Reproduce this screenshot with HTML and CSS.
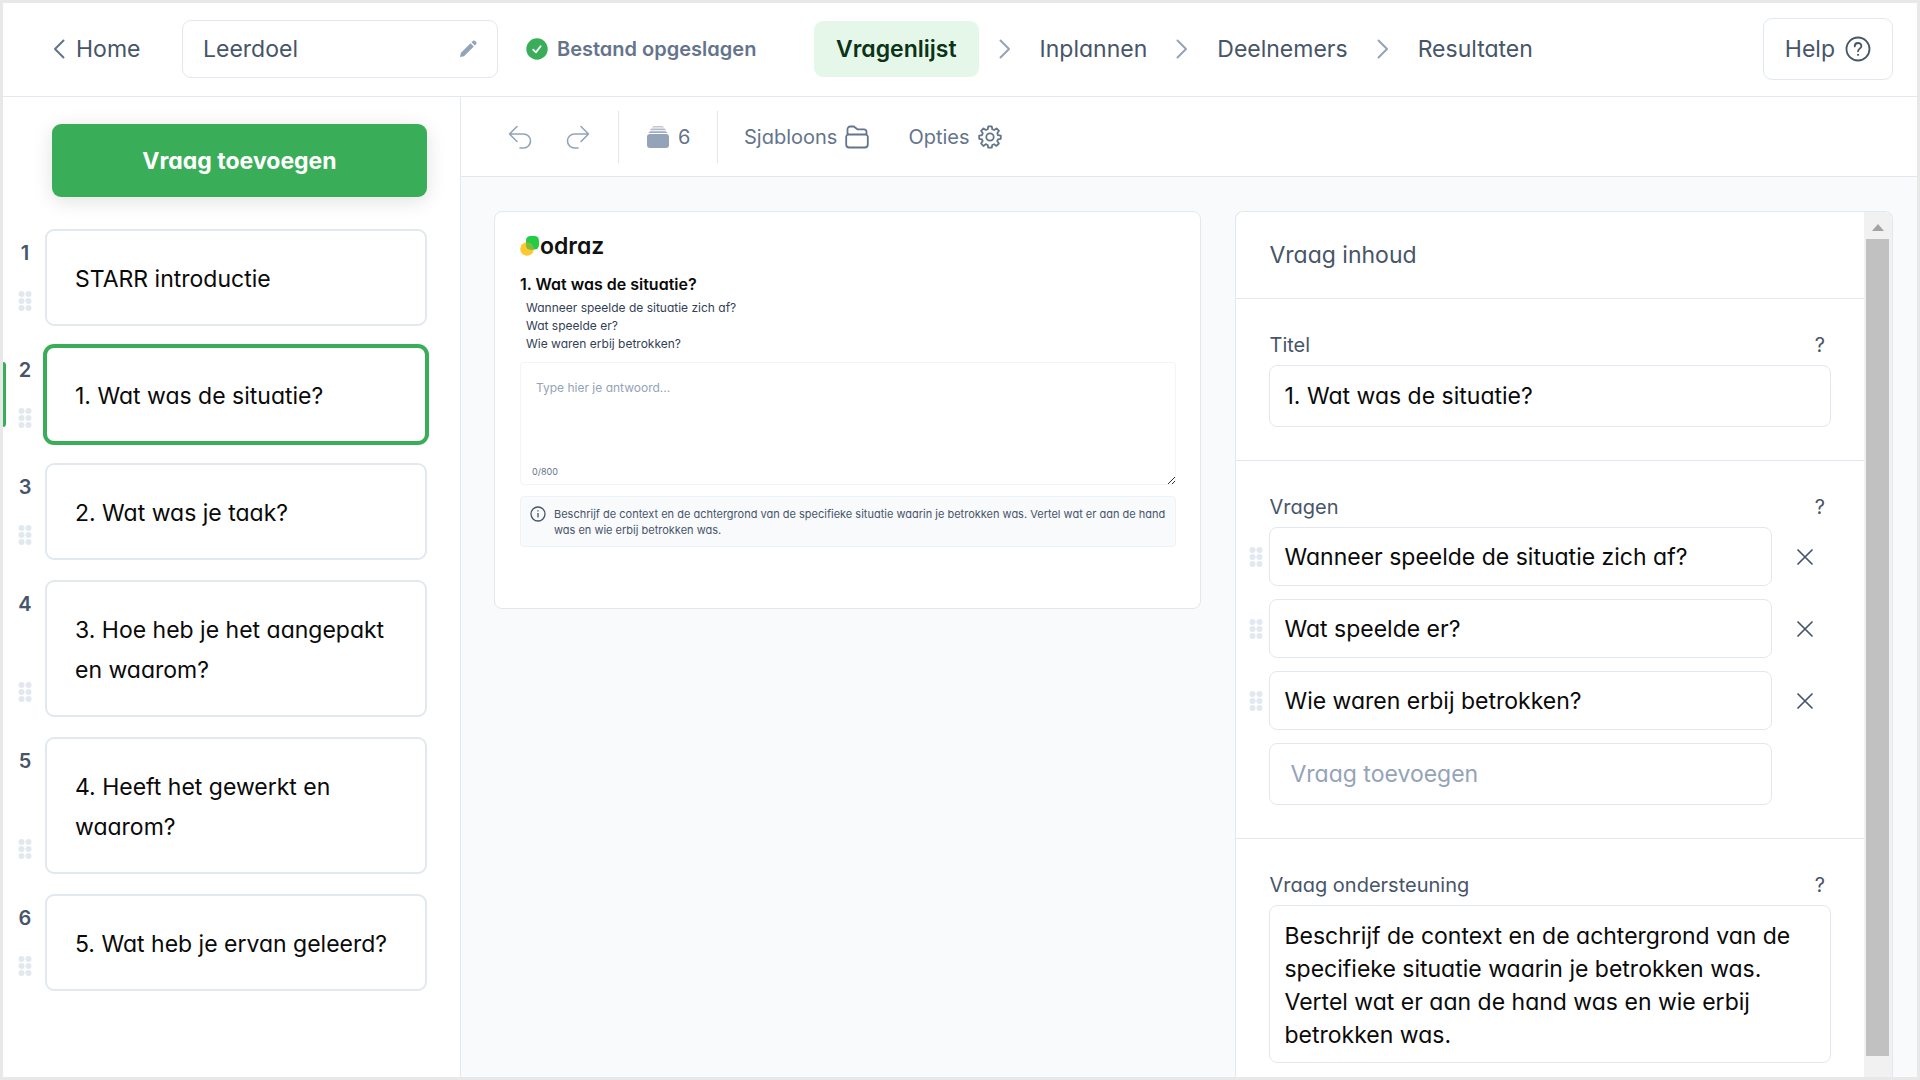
FILE: index.html
```html
<!DOCTYPE html>
<html lang="nl">
<head>
<meta charset="utf-8">
<meta name="viewport" content="width=device-width, initial-scale=1">
<title>Leerdoel – Vragenlijst</title>
<link rel="stylesheet" href="styles.css">
</head>
<body>
<svg class="defs" aria-hidden="true">
  <symbol id="dots" viewBox="0 0 14 20"><g fill="currentColor"><circle cx="3.500" cy="3" r="3"/><circle cx="10.500" cy="3" r="3"/><circle cx="3.500" cy="10" r="3"/><circle cx="10.500" cy="10" r="3"/><circle cx="3.500" cy="17" r="3"/><circle cx="10.500" cy="17" r="3"/></g></symbol>
  <symbol id="chevron" viewBox="0 0 12 20"><path d="M1.500 1.500 10 10l-8.500 8.500" fill="none" stroke="currentColor" stroke-width="2" stroke-linecap="round" stroke-linejoin="round"/></symbol>
  <symbol id="cross" viewBox="0 0 18 18"><path d="M2 2l14 14M16 2 2 16" fill="none" stroke="currentColor" stroke-width="1.700" stroke-linecap="round"/></symbol>
</svg>

<header class="topbar">
  <a class="home" href="#">
    <svg class="icon-chevron" viewBox="0 0 12 20"><path d="M10.500 1.500 2 10l8.500 8.500" fill="none" stroke="currentColor" stroke-width="2" stroke-linecap="round" stroke-linejoin="round"/></svg>
    Home
  </a>
  <div class="name-field">
    <input type="text" value="Leerdoel" aria-label="Naam">
    <svg class="icon-pencil" viewBox="0 0 18 18"><path d="M1 17l.8-4L11.500 3.200l3.300 3.300L5 16.200zM12.500 2.200l1-1a2 2 0 0 1 2.900 0l.4.4a2 2 0 0 1 0 2.900l-1 1z" fill="currentColor"/></svg>
  </div>
  <p class="saved">
    <svg class="icon-check" viewBox="0 0 22 22"><circle cx="11" cy="11" r="10.700" fill="#3aad59"/><path d="M7.200 11.700l2.700 2.700 4.700-6.200" fill="none" stroke="#fff" stroke-width="1.800" stroke-linecap="round" stroke-linejoin="round"/></svg>
    Bestand opgeslagen
  </p>
  <nav class="steps">
    <a class="step step-active" href="#">Vragenlijst</a>
    <svg class="icon-chevron"><use href="#chevron"/></svg>
    <a class="step" href="#">Inplannen</a>
    <svg class="icon-chevron"><use href="#chevron"/></svg>
    <a class="step" href="#">Deelnemers</a>
    <svg class="icon-chevron"><use href="#chevron"/></svg>
    <a class="step" href="#">Resultaten</a>
  </nav>
  <button class="help" type="button">Help
    <svg class="icon-help" viewBox="0 0 26 26" fill="none" stroke="currentColor" stroke-linecap="round"><circle cx="13" cy="13" r="11.500" stroke-width="1.800"/><path d="M9.700 10.400c0-4.600 6.700-4.300 6.700-.4 0 2.600-3.400 2.700-3.400 5.300" stroke-width="1.800"/><circle cx="13" cy="18.800" r=".6" fill="currentColor" stroke-width="1"/></svg>
  </button>
</header>

<div class="workspace">
  <aside class="sidebar">
    <button class="add-question" type="button">Vraag toevoegen</button>
    <ol class="questions">
      <li class="question"><div class="gutter"><b>1</b><svg class="icon-dots"><use href="#dots"/></svg></div><button class="card" type="button">STARR introductie</button></li>
      <li class="question question-active"><div class="gutter"><b>2</b><svg class="icon-dots"><use href="#dots"/></svg></div><button class="card" type="button">1. Wat was de situatie?</button></li>
      <li class="question"><div class="gutter"><b>3</b><svg class="icon-dots"><use href="#dots"/></svg></div><button class="card" type="button">2. Wat was je taak?</button></li>
      <li class="question"><div class="gutter"><b>4</b><svg class="icon-dots"><use href="#dots"/></svg></div><button class="card" type="button">3. Hoe heb je het aangepakt en waarom?</button></li>
      <li class="question"><div class="gutter"><b>5</b><svg class="icon-dots"><use href="#dots"/></svg></div><button class="card" type="button">4. Heeft het gewerkt en waarom?</button></li>
      <li class="question"><div class="gutter"><b>6</b><svg class="icon-dots"><use href="#dots"/></svg></div><button class="card" type="button">5. Wat heb je ervan geleerd?</button></li>
    </ol>
  </aside>

  <main class="main">
    <div class="toolbar">
      <div class="tool-group tool-history">
        <button class="tool" type="button" aria-label="Ongedaan maken"><svg class="icon-tool" viewBox="0 0 24 24" fill="none" stroke="currentColor" stroke-width="1.600" stroke-linecap="round" stroke-linejoin="round"><path d="M9 1.500 1.500 9 9 16.500M1.500 9H15.500a7 7 0 0 1 0 14H12"/></svg></button>
        <button class="tool" type="button" aria-label="Opnieuw"><svg class="icon-tool" viewBox="0 0 24 24" fill="none" stroke="currentColor" stroke-width="1.600" stroke-linecap="round" stroke-linejoin="round"><path d="M15 1.500 22.500 9 15 16.500M22.500 9H8.500a7 7 0 0 0 0 14H12"/></svg></button>
      </div>
      <div class="tool-group tool-count">
        <svg class="icon-tool icon-stack" viewBox="0 0 24 24" fill="currentColor"><rect x="1" y="9" width="22" height="14" rx="3"/><path d="M2.500 8a3 3 0 0 1 2.500-1.800h14A3 3 0 0 1 21.500 8z" opacity=".9"/><path d="M4 5.200a2 2 0 0 1 2-1.700h12a2 2 0 0 1 2 1.700z" opacity=".75"/><path d="M6 2.500A2 2 0 0 1 8 1h8a2 2 0 0 1 2 1.500z" opacity=".6"/></svg>
        <span>6</span>
      </div>
      <div class="tool-group tool-menu">
        <button class="tool" type="button">Sjabloons
          <svg class="icon-tool" viewBox="0 0 24 24" fill="none" stroke="currentColor" stroke-width="1.800" stroke-linejoin="round"><path d="M1.200 12v7.500a3 3 0 0 0 3 3h15.600a3 3 0 0 0 3-3V12a2.300 2.300 0 0 0-2.300-2.500h-17A2.300 2.300 0 0 0 1.200 12zM2.500 9.500V4.200A2.700 2.700 0 0 1 5.200 1.500h3.600l3.600 2.800H19a2.500 2.500 0 0 1 2.500 2.500v2.700"/></svg>
        </button>
        <button class="tool" type="button">Opties
          <svg class="icon-tool" viewBox="0 0 24 24" fill="none" stroke="currentColor" stroke-width="1.800" stroke-linejoin="round"><circle cx="12" cy="12" r="3.700"/><path d="M10.300 1.300h3.400l.6 2.900 1.800.8 2.500-1.600L21 5.800 19.300 8.200l.7 1.900 2.800.5v3.200l-2.800.5-.8 1.800 1.700 2.400-2.400 2.400-2.400-1.700-1.800.8-.6 2.700h-3.400l-.6-2.700-1.900-.8L5.400 21 3.100 18.500l1.600-2.400-.7-1.800-2.800-.5v-3.200l2.800-.5.8-1.900L3.100 5.800l2.400-2.400L7.900 5l1.800-.8z"/></svg>
        </button>
      </div>
    </div>

    <div class="content">
      <section class="preview">
        <div class="brand">
          <svg class="icon-brand" viewBox="0 0 20 20"><circle cx="7" cy="13" r="6.800" fill="#fdc82f"/><rect x="6" y="0" width="13" height="13.500" rx="4.500" fill="#22cc44"/><path d="M7 6.200a6.800 6.800 0 0 1 6.800 7.300H10.500A4.500 4.500 0 0 1 6 9V6.300z" fill="#82bb3c"/></svg>
          <span>odraz</span>
        </div>
        <h1>1. Wat was de situatie?</h1>
        <ul class="prompts"><li>Wanneer speelde de situatie zich af?</li><li>Wat speelde er?</li><li>Wie waren erbij betrokken?</li></ul>
        <div class="answer">
          <textarea placeholder="Type hier je antwoord..." aria-label="Antwoord"></textarea>
          <span class="counter">0/800</span>
          <svg class="icon-grip" viewBox="0 0 7 7"><path d="M0 7 7 0M4 7l3-3" stroke="#333" stroke-width="1"/></svg>
        </div>
        <div class="hint">
          <svg class="icon-info" viewBox="0 0 16 16" fill="none" stroke="currentColor" stroke-width="1.300"><circle cx="8" cy="8" r="7"/><path d="M8 7v4.500M8 4.300v1.300"/></svg>
          <p>Beschrijf de context en de achtergrond van de specifieke situatie waarin je betrokken was. Vertel wat er aan de hand was en wie erbij betrokken was.</p>
        </div>
      </section>

      <section class="panel">
        <form class="panel-body">
          <h2>Vraag inhoud</h2>
          <div class="section">
            <div class="label-row"><label for="titel">Titel</label><button class="tip" type="button">?</button></div>
            <input class="field" id="titel" type="text" value="1. Wat was de situatie?">
          </div>
          <div class="section">
            <div class="label-row"><label for="vraag-1">Vragen</label><button class="tip" type="button">?</button></div>
            <div class="rows">
              <div class="row"><svg class="icon-dots"><use href="#dots"/></svg><input class="field" id="vraag-1" type="text" value="Wanneer speelde de situatie zich af?"><button class="remove" type="button" aria-label="Verwijderen"><svg class="icon-cross"><use href="#cross"/></svg></button></div>
              <div class="row"><svg class="icon-dots"><use href="#dots"/></svg><input class="field" type="text" aria-label="Vraag 2" value="Wat speelde er?"><button class="remove" type="button" aria-label="Verwijderen"><svg class="icon-cross"><use href="#cross"/></svg></button></div>
              <div class="row"><svg class="icon-dots"><use href="#dots"/></svg><input class="field" type="text" aria-label="Vraag 3" value="Wie waren erbij betrokken?"><button class="remove" type="button" aria-label="Verwijderen"><svg class="icon-cross"><use href="#cross"/></svg></button></div>
              <div class="row row-new"><input class="field field-new" type="text" aria-label="Vraag toevoegen" placeholder="Vraag toevoegen"></div>
            </div>
          </div>
          <div class="section">
            <div class="label-row"><label for="hulp">Vraag ondersteuning</label><button class="tip" type="button">?</button></div>
            <textarea class="field field-area" id="hulp" rows="4">Beschrijf de context en de achtergrond van de specifieke situatie waarin je betrokken was. Vertel wat er aan de hand was en wie erbij betrokken was.</textarea>
          </div>
        </form>
        <div class="scrollbar" aria-hidden="true">
          <svg class="icon-arrow" viewBox="0 0 12 7"><path d="M0 7 6 0l6 7z" fill="#a3a3a3"/></svg>
          <div class="thumb"></div>
        </div>
      </section>
    </div>
  </main>
</div>
</body>
</html>
```
FILE: styles.css
```css
:root {
  --line: #e2e8f0;
  --text: #475569;
  --muted: #64748b;
  --faint: #94a3b8;
  --green: #3aad59;
  --size-lg: 23px;
  --size-md: 20px;
}

* { box-sizing: border-box; }

body {
  display: flex;
  flex-direction: column;
  min-height: 100vh;
  margin: 0;
  border: 3px solid #e8e8e8;
  background: #fff;
  color: var(--text);
  font-family: Inter, "Noto Sans", sans-serif;
  font-size: var(--size-lg);
  font-feature-settings: "cv11";
}

h1, h2, p, ul, ol { margin: 0; padding: 0; font-weight: 400; }
ul, ol { list-style: none; }
a { color: inherit; text-decoration: none; }
svg { display: block; flex: none; }
button, input, textarea {
  font: inherit;
  font-feature-settings: inherit;
  color: inherit;
  margin: 0;
  padding: 0;
  border: 0;
  background: none;
}
textarea { display: block; resize: none; overflow: hidden; }
::placeholder { color: var(--faint); opacity: 1; }

.defs { position: absolute; width: 0; height: 0; }
.icon-chevron { width: 12px; height: 20px; color: var(--faint); }
.icon-dots { width: 14px; height: 20px; color: var(--line); }
.icon-pencil { width: 18px; height: 18px; color: var(--faint); }
.icon-check { width: 22px; height: 22px; }
.icon-help { width: 26px; height: 26px; }
.icon-tool { width: 24px; height: 24px; }
.icon-cross { width: 18px; height: 18px; }

/* Top bar */
.topbar {
  display: flex;
  align-items: center;
  height: 94px;
  padding: 0 24px 2px 50px;
  border-bottom: 1px solid var(--line);
}
.home { display: flex; align-items: center; gap: 11px; width: 129px; }
.home .icon-chevron { color: var(--muted); }
.name-field {
  display: flex;
  align-items: center;
  width: 316px;
  height: 58px;
  padding: 0 20px;
  border: 1px solid var(--line);
  border-radius: 9px;
}
.name-field input { flex: 1; min-width: 0; }
.saved {
  display: flex;
  align-items: center;
  gap: 9px;
  width: 288px;
  margin-left: 28px;
  color: var(--muted);
  font-size: var(--size-md);
  font-weight: 600;
  white-space: nowrap;
}
.steps { display: flex; align-items: center; gap: 29px; }
.step-active {
  padding: 14px 22px;
  margin-right: -9px;
  border-radius: 9px;
  background: #e5f7e9;
  color: #0b3318;
  font-weight: 600;
  line-height: 28px;
}
.help {
  display: flex;
  align-items: center;
  gap: 10px;
  height: 62px;
  margin-left: auto;
  padding: 0 21px;
  border: 1px solid var(--line);
  border-radius: 9px;
}

/* Question list */
.workspace { display: flex; flex: 1; }
.sidebar { flex: none; width: 458px; border-right: 1px solid var(--line); }
.add-question {
  display: block;
  width: 375px;
  height: 73px;
  margin: 27px 0 32px 49px;
  border-radius: 9px;
  background: var(--green);
  box-shadow: 0 4px 20px rgb(0 0 0 / 12%);
  color: #fff;
  font-weight: 700;
}
.questions { display: flex; flex-direction: column; gap: 20px; }
.question { display: flex; }
.gutter {
  display: flex;
  flex-direction: column;
  justify-content: space-between;
  align-items: center;
  width: 42px;
  padding: 12px 0 15px 2px;
  font-size: var(--size-md);
  line-height: 24px;
}
.gutter b { font-weight: 600; }
.card {
  width: 382px;
  padding: 28px 20px 25px 28px;
  border: 2px solid var(--line);
  border-radius: 9px;
  background: #fff;
  color: #0a0a0a;
  line-height: 40px;
  text-align: left;
}
.question-active { position: relative; }
.question-active .card { border-color: var(--green); box-shadow: 0 0 0 2px var(--green); }
.question-active::before {
  content: "";
  position: absolute;
  top: 16px;
  bottom: 16px;
  left: 0;
  width: 3px;
  border-radius: 0 3px 3px 0;
  background: var(--green);
}

/* Toolbar */
.main { display: flex; flex: 1; flex-direction: column; min-width: 0; background: #f8fafc; }
.toolbar {
  display: flex;
  align-items: center;
  height: 80px;
  padding-left: 47px;
  border-bottom: 1px solid var(--line);
  background: #fff;
  color: var(--muted);
  font-size: var(--size-md);
}
.tool-group { display: flex; align-items: center; height: 52px; border-right: 1px solid var(--line); }
.tool { display: flex; align-items: center; gap: 8px; }
.tool-history { gap: 34px; width: 111px; color: var(--faint); }
.tool-count { gap: 8px; width: 99px; padding-left: 27px; }
.icon-stack { color: var(--faint); }
.tool-menu { gap: 39px; padding-left: 26px; border-right: 0; }

/* Content */
.content {
  display: grid;
  grid-template-columns: minmax(0, 708fr) minmax(0, 658fr);
  flex: 1;
  align-items: start;
  gap: 34px;
  padding: 34px 24px 0 33px;
}
.preview {
  min-height: 398px;
  padding: 23px 24px 24px 25px;
  border: 1px solid var(--line);
  border-radius: 8px;
  background: #fff;
}
.brand {
  display: flex;
  align-items: center;
  height: 22px;
  color: #111;
  font-size: var(--size-lg);
  font-weight: 600;
}
.icon-brand { width: 20px; height: 20px; }
.preview h1 { margin-top: 17px; color: #0a0a0a; font-size: 16px; font-weight: 600; line-height: 20px; }
.prompts { padding: 5px 0 9px 6px; color: #334155; font-size: 12px; line-height: 18px; }
.answer { position: relative; }
.answer textarea {
  width: 100%;
  height: 123px;
  padding: 16px 15px;
  border: 1px solid #f1f5f9;
  border-radius: 4px;
  font-size: 12px;
  line-height: 18px;
}
.counter { position: absolute; left: 12px; bottom: 6px; color: var(--muted); font-size: 9px; line-height: 14px; }
.icon-grip { position: absolute; right: 1px; bottom: 1px; width: 7px; height: 7px; }
.hint {
  display: flex;
  gap: 8px;
  margin-top: 11px;
  padding: 9px 9px 8px;
  border: 1px solid #edf2f7;
  border-radius: 4px;
  background: #f8fafc;
  font-size: 11px;
  line-height: 16px;
}
.icon-info { width: 16px; height: 16px; }

/* Editing panel */
.panel {
  display: flex;
  align-self: stretch;
  border: 1px solid var(--line);
  border-bottom: 0;
  border-radius: 8px 8px 0 0;
  background: #fff;
  overflow: hidden;
}
.panel-body { flex: 1; min-width: 0; }
.panel h2 { padding: 28px 33px; font-size: var(--size-lg); line-height: 30px; }
.section { padding: 32px 33px; border-top: 1px solid var(--line); }
.section:last-child { padding-bottom: 12px; }
.label-row {
  display: flex;
  justify-content: space-between;
  padding-right: 6px;
  margin-bottom: 6px;
  font-size: var(--size-md);
  line-height: 28px;
}
.field {
  width: 100%;
  height: 62px;
  padding: 0 14px;
  border: 1px solid var(--line);
  border-radius: 8px;
  color: #0a0a0a;
}
.section { padding-bottom: 33px; }
.rows { display: flex; flex-direction: column; gap: 13px; margin-left: -20px; }
.row { display: flex; align-items: center; }
.row .field { flex: 1; min-width: 0; height: 59px; margin-left: 6px; }
.row .field-new { height: 62px; padding: 0 20px; }
.row-new { padding: 0 59px 0 14px; }
.remove { width: 59px; padding-left: 24px; }
.field-area { height: 158px; padding: 14px; line-height: 33px; }
.scrollbar {
  display: flex;
  flex: none;
  flex-direction: column;
  align-items: center;
  gap: 8px;
  width: 28px;
  padding: 12px 3px 21px 2px;
  background: #f1f1f1;
}
.icon-arrow { width: 12px; height: 7px; }
.thumb { flex: 1; width: 100%; background: #c1c1c1; }
```
